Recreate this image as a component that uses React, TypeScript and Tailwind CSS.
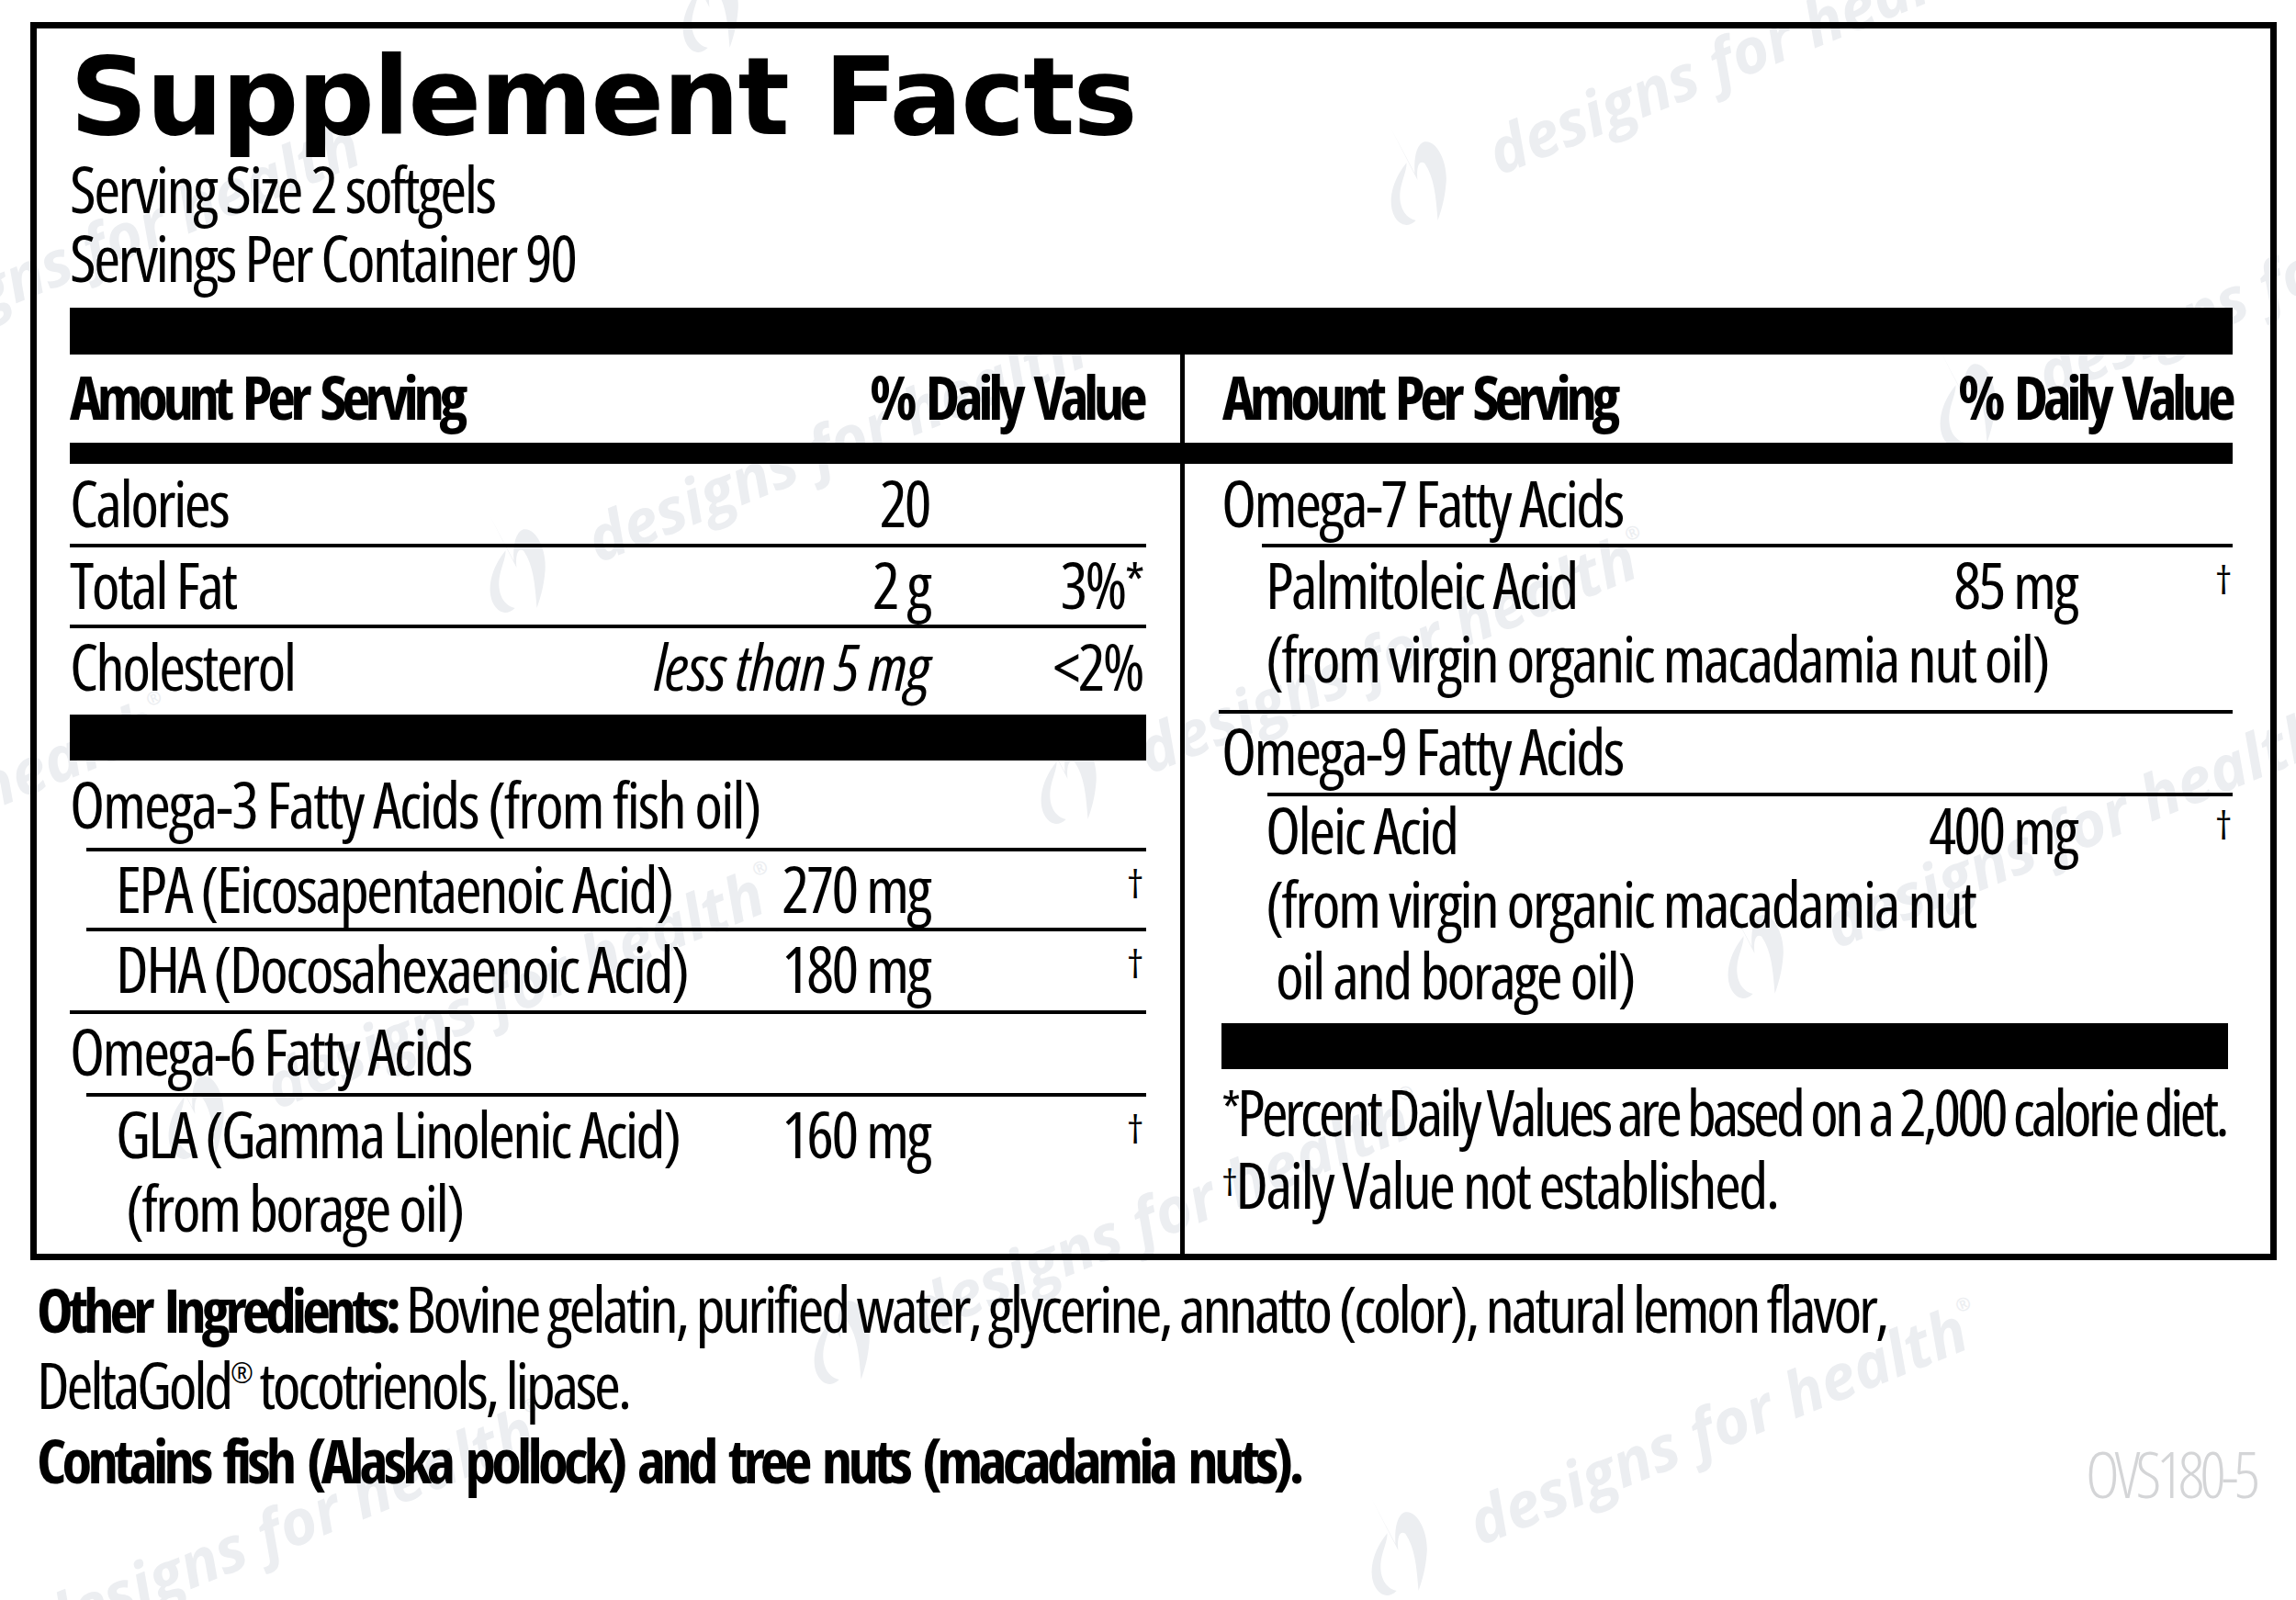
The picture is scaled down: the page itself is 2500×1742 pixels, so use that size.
import type { ReactNode } from "react";

const cond = "font-['Open_Sans',sans-serif] [font-stretch:condensed] tracking-[-2.6px]";
const boldCond = "font-bold text-[67px] [word-spacing:8px]";

const dagger = <span className="text-[42px] leading-none align-[16px]">†</span>;

function Line({ cls = "" }: { cls?: string }) {
  return <div className={`h-[4px] bg-black ${cls}`} />;
}

function Row({
  cls,
  name,
  value,
  dv,
  dvCls,
}: {
  cls: string;
  name: ReactNode;
  value?: ReactNode;
  dv?: ReactNode;
  dvCls: string;
}) {
  return (
    <div className={`flex ${cls}`}>
      <span className="flex-1 whitespace-nowrap">{name}</span>
      {value && <span className="whitespace-nowrap text-right">{value}</span>}
      <span className={`text-right whitespace-nowrap ${dvCls}`}>{dv}</span>
    </div>
  );
}

// logo anchor (bottom-left) of each faint watermark
const marks = [
  { x: 1521, y: 258 },
  { x: 2119, y: 500 },
  { x: 540, y: 680 },
  { x: 1140, y: 910 },
  { x: 1888, y: 1100 },
  { x: 190, y: 1275 },
  { x: 893, y: 1520 },
  { x: 1500, y: 1750 },
  { x: -60, y: 1860 },
  { x: -470, y: 1090 },
  { x: -250, y: 460 },
  { x: 750, y: 70 },
];

function Watermark({ x, y }: { x: number; y: number }) {
  return (
    <div
      className="absolute flex items-end gap-[34px] origin-bottom-left -rotate-[22deg] text-[#eceef1] whitespace-nowrap"
      style={{ left: x, top: y - 115 }}
    >
      <svg width="94" height="115" viewBox="0 0 94 115" fill="none">
        <path
          d="M40 44 C18 56 4 76 6 94 C8 106 16 110 26 106 C14 98 14 80 26 64 C32 56 38 50 40 44 Z"
          fill="#eceef1"
        />
        <path
          d="M38 0 L44 58 C50 40 58 30 66 30 C80 32 82 60 72 80 C64 96 56 106 48 115 C56 90 62 70 58 52 C54 46 48 52 44 66 Z"
          fill="#eceef1"
        />
      </svg>
      <span className="font-['Open_Sans',sans-serif] italic font-bold text-[68px] leading-none pb-[12px]">
        designs for health<span className="text-[20px] align-[40px]">®</span>
      </span>
    </div>
  );
}

export default function App() {
  return (
    <div className="relative w-[2500px] h-[1742px] bg-white overflow-hidden text-black">
      {marks.map((m, i) => (
        <Watermark key={i} x={m.x} y={m.y} />
      ))}

      <div className={`relative ${cond} text-[70px] leading-[80px]`}>
        {/* label box */}
        <div className="ml-[33px] mt-[24px] w-[2446px] h-[1348px] border-[7px] border-black pl-[36px] pr-[41px] flex flex-col">
          <h1 className="mt-[15px] font-['DejaVu_Sans',sans-serif] [font-stretch:normal] font-bold text-[118px] leading-none tracking-[-2px] whitespace-nowrap">
            Supplement Facts
          </h1>
          <div className="mt-[4px] leading-[75px]">
            <p>Serving Size 2 softgels</p>
            <p>Servings Per Container 90</p>
          </div>
          <div className="mt-[17px] h-[51px] bg-black" />

          {/* column headers */}
          <div className={`grid grid-cols-[1172px_1fr_1104px] h-[96px] ${boldCond} tracking-[-5.5px]`}>
            <div className="flex justify-between pt-[5px]">
              <span>Amount Per Serving</span>
              <span className="pr-[4px]">% Daily Value</span>
            </div>
            <div className="flex justify-center">
              <div className="w-[5px] bg-black" />
            </div>
            <div className="flex justify-between pt-[5px] pl-[4px]">
              <span>Amount Per Serving</span>
              <span className="pr-[2px]">% Daily Value</span>
            </div>
          </div>
          <div className="h-[23px] bg-black" />

          {/* body */}
          <div className="grid grid-cols-[1172px_1fr_1104px] flex-1">
            {/* left column */}
            <div className="flex flex-col">
              <Row cls="h-[87px] pt-[2px]" name="Calories" value="20" dvCls="w-[236px]" />
              <Line />
              <Row
                cls="h-[84px]"
                name="Total Fat"
                value="2 g"
                dv={
                  <>
                    3%<span className="text-[56px] leading-none align-[8px]">*</span>
                  </>
                }
                dvCls="w-[236px] pr-[4px]"
              />
              <Line />
              <Row
                cls="h-[94px] pt-[1px]"
                name="Cholesterol"
                value={<i className="tracking-[-1.2px]">less than 5 mg</i>}
                dv="<2%"
                dvCls="w-[236px] pr-[4px]"
              />
              <div className="h-[50px] bg-black" />
              <Row
                cls="h-[95px] pt-[7px] tracking-[-2.2px]"
                name="Omega-3 Fatty Acids (from fish oil)"
                dvCls="w-[236px]"
              />
              <Line cls="ml-[18px]" />
              <Row
                cls="h-[83px] pl-[50px]"
                name="EPA (Eicosapentaenoic Acid)"
                value="270 mg"
                dv={dagger}
                dvCls="w-[236px] pr-[5px]"
              />
              <Line cls="ml-[18px]" />
              <Row
                cls="h-[86px] pl-[50px]"
                name="DHA (Docosahexaenoic Acid)"
                value="180 mg"
                dv={dagger}
                dvCls="w-[236px] pr-[5px]"
              />
              <Line />
              <Row cls="h-[86px]" name="Omega-6 Fatty Acids" dvCls="w-[236px]" />
              <Line cls="ml-[18px]" />
              <Row
                cls="pl-[50px]"
                name="GLA (Gamma Linolenic Acid)"
                value="160 mg"
                dv={dagger}
                dvCls="w-[236px] pr-[5px]"
              />
              <p className="pl-[61px]">(from borage oil)</p>
            </div>

            {/* divider */}
            <div className="flex justify-center">
              <div className="w-[5px] bg-black" />
            </div>

            {/* right column */}
            <div className="flex flex-col">
              <Row cls="h-[87px] pt-[2px] pl-[3px]" name="Omega-7 Fatty Acids" dvCls="w-[170px]" />
              <Line cls="ml-[47px]" />
              <div className="h-[177px] pl-[51px]">
                <Row cls="" name="Palmitoleic Acid" value="85 mg" dv={dagger} dvCls="w-[170px] pr-[3px]" />
                <p className="whitespace-nowrap">(from virgin organic macadamia nut oil)</p>
              </div>
              <Line />
              <Row cls="h-[86px] pl-[3px]" name="Omega-9 Fatty Acids" dvCls="w-[170px]" />
              <Line cls="ml-[53px]" />
              <div className="h-[247px] pl-[51px] -mt-[4px]">
                <Row cls="" name="Oleic Acid" value="400 mg" dv={dagger} dvCls="w-[170px] pr-[3px]" />
                <p className="whitespace-nowrap">(from virgin organic macadamia nut</p>
                <p className="pl-[11px] whitespace-nowrap -mt-[2px]">oil and borage oil)</p>
              </div>
              <div className="mt-[4px] h-[50px] bg-black ml-[3px] mr-[5px]" />
              <div className="pt-[7px] pl-[3px] whitespace-nowrap leading-[79px]">
                <p className="tracking-[-4px]">
                  <span className="text-[54px] leading-none align-[8px]">*</span>Percent Daily Values are based on a
                  2,000 calorie diet.
                </p>
                <p>
                  <span className="text-[40px] leading-none align-[14px]">†</span>Daily Value not established.
                </p>
              </div>
            </div>
          </div>
        </div>

        {/* ingredients */}
        <div className="mt-[11px] pl-[40px] pr-[44px] leading-[82px] whitespace-nowrap tracking-[-3.3px]">
          <p>
            <span className={`${boldCond} tracking-[-5px]`}>Other Ingredients:</span> Bovine gelatin, purified
            water, glycerine, annatto (color), natural lemon flavor,
          </p>
          <p>
            DeltaGold<span className="text-[30px] leading-none align-[28px]">®</span> tocotrienols, lipase.
          </p>
          <div className="flex justify-between">
            <p className={`${boldCond} tracking-[-4.8px]`}>
              Contains fish (Alaska pollock) and tree nuts (macadamia nuts).
            </p>
            <p className="pt-[15px] font-light tracking-[-5px] text-[#d4d5d7]">OVS180-5</p>
          </div>
        </div>
      </div>
    </div>
  );
}
